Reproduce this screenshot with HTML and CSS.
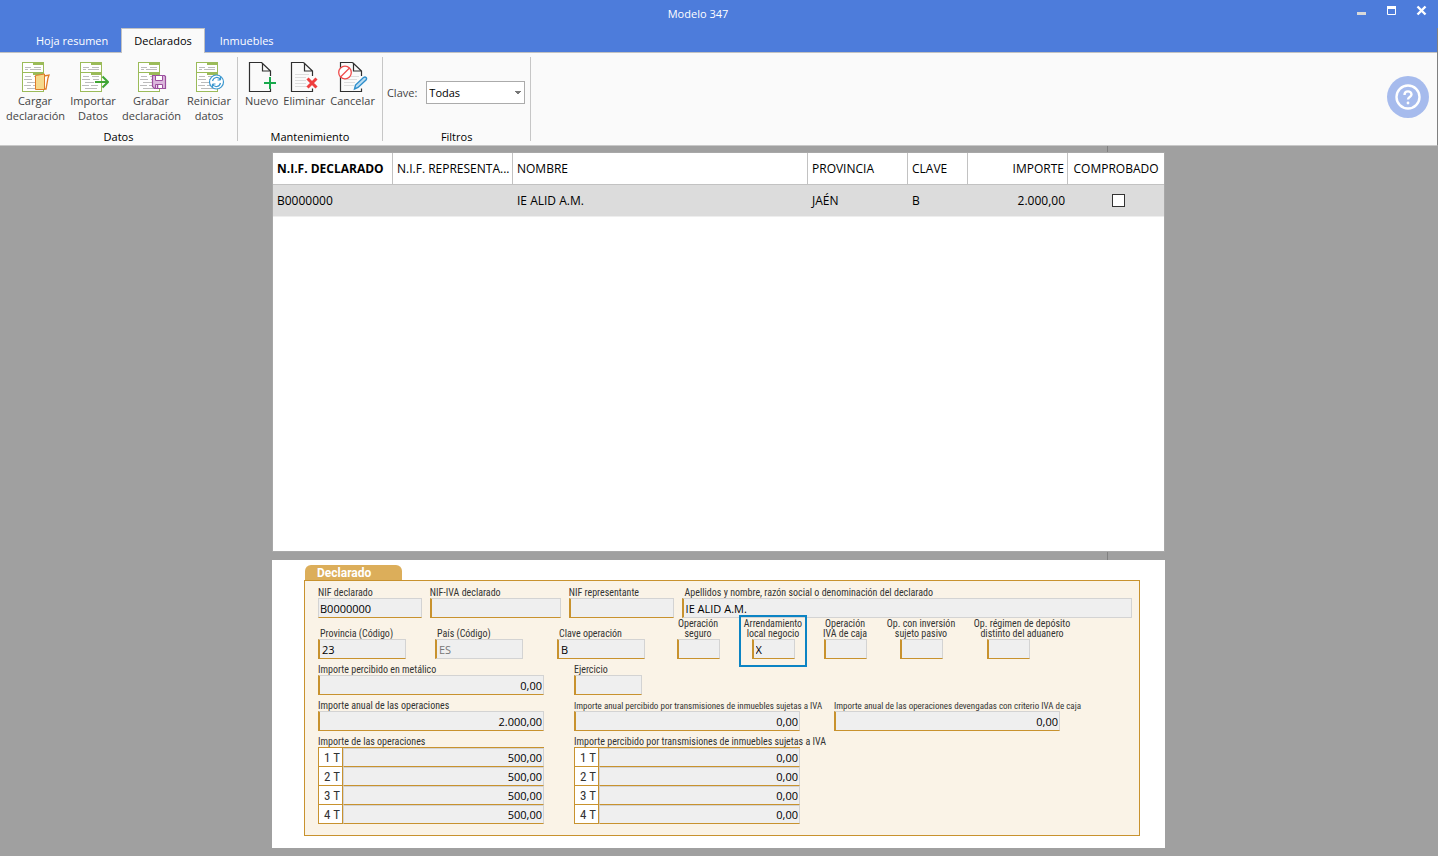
FILE: index.html
```html
<!DOCTYPE html>
<html lang="es">
<head>
<meta charset="utf-8">
<title>Modelo 347</title>
<link rel="stylesheet" href="styles.css">
</head>
<body>
<svg class="defs" aria-hidden="true">
  <symbol id="form-sheet" viewBox="0 0 30 32">
    <rect x="1.500" y="1.500" width="21" height="29" fill="#fff" stroke="#9bbb59"/>
    <path d="M12 1h11v3H12zM12 11h11v3H12z" fill="#9bbb59"/>
    <path d="M1 11.500h21" stroke="#9bbb59"/>
    <path d="M4 6.500h6M13 6.500h7M4 8.500h3M9 8.500h11M4 15.500h6M13 15.500h7M3 18.500h8M14 18.500h6M6 21.500h9M3 24.500h7M12 24.500h7M6 27.500h12" stroke="#bcbcbc"/>
  </symbol>
  <symbol id="page" viewBox="0 0 30 32">
    <path d="M14.500 1.500h-12v29h21v-3M14.500 1.500l9 8.500v5M15.500 2.500v7.500h8" fill="none" stroke="#2f2f2f" stroke-width="1.200"/>
  </symbol>
</svg>

<header>
  <div class="titlebar">
    <h1>Modelo 347</h1>
    <div class="window-buttons">
      <button aria-label="Minimizar"><svg width="11" height="11"><path d="M1 8.500h9" stroke="#d9d9d9" stroke-width="3"/></svg></button>
      <button aria-label="Maximizar"><svg width="11" height="11"><path d="M1.500 2v7.500h8V2" fill="none" stroke="#fff"/><path d="M1 2.500h9" stroke="#fff" stroke-width="3"/></svg></button>
      <button aria-label="Cerrar"><svg width="11" height="11"><path d="M1.500 1.500l8 8M9.500 1.500l-8 8" stroke="#fff" stroke-width="2.400"/></svg></button>
    </div>
  </div>
  <nav class="tabs">
    <button>Hoja resumen</button>
    <button class="active">Declarados</button>
    <button>Inmuebles</button>
  </nav>
  <div class="ribbon">
    <section class="group">
      <div class="tools data-tools">
        <button><svg width="30" height="32"><use href="#form-sheet"/><path d="M23 15l5-1-1 3-2 11h-3" fill="#fff" stroke="#e07b28" stroke-width="1.300"/><path d="M14.500 14.500l9-1.500v15.500h-9z" fill="#f6d98c" stroke="#e07b28"/></svg>Cargar<br>declaración</button>
        <button><svg width="30" height="32"><use href="#form-sheet"/><path d="M16 21h13M23.500 15.500l5.500 5.500-5.500 5.500" fill="none" stroke="#3fa535" stroke-width="2"/></svg>Importar<br>Datos</button>
        <button><svg width="30" height="32"><use href="#form-sheet"/><path d="M15.500 14.500h12l1 1v12h-11l-2-2z" fill="#dcb8dd" stroke="#9b4f9e" stroke-width="1.200"/><path d="M18.500 14.500h7v5h-7zM18.500 23.500h7v4h-7z" fill="#fff" stroke="#9b4f9e"/><path d="M20.500 24v3" stroke="#9b4f9e" stroke-width="1.500"/></svg>Grabar<br>declaración</button>
        <button><svg width="30" height="32"><use href="#form-sheet"/><circle cx="21.500" cy="21" r="7" fill="#fff" stroke="#3b97cf" stroke-width="1.200"/><path d="M17.500 20c1-4 6-5 8-1v-3M25.500 19h-3M25.500 22c-1 4-6 5-8 1v3M17.500 23h3" fill="none" stroke="#3b97cf" stroke-width="1.200"/></svg>Reiniciar<br>datos</button>
      </div>
      <h2>Datos</h2>
    </section>
    <section class="group">
      <div class="tools edit-tools">
        <button><svg width="30" height="32"><use href="#page"/><path d="M23 16v12M17 22h12" stroke="#18a94c" stroke-width="2"/></svg>Nuevo</button>
        <button><svg width="30" height="32"><use href="#page"/><path d="M6 13.500h14M6 16.500h11M6 19.500h11M6 22.500h11M6 25.500h12" stroke="#ddd"/><path d="M18.500 17.500l9 9M27.500 17.500l-9 9" stroke="#ef3e3e" stroke-width="3"/></svg>Eliminar</button>
        <button><svg width="30" height="32"><use href="#page"/><path d="M10 15.500h11M6 18.500h13M6 21.500h11M6 24.500h10" stroke="#ddd"/><circle cx="7" cy="11.500" r="6.300" fill="#fff" stroke="#ef4b4b" stroke-width="1.300"/><path d="M2.500 16l9-9" stroke="#ef4b4b" stroke-width="1.300"/><path d="M16.500 28l1-4 8-7.500c2-1.500 4 .5 2.500 2.500l-8 7.500z" fill="#b9dcf2" stroke="#2f8fcc" stroke-width="1.400"/></svg>Cancelar</button>
      </div>
      <h2>Mantenimiento</h2>
    </section>
    <section class="group">
      <div class="filter">
        <label for="clave">Clave:</label>
        <select id="clave"><option>Todas</option></select>
      </div>
      <h2>Filtros</h2>
    </section>
    <button class="help" aria-label="Ayuda"><svg width="42" height="42"><circle cx="21" cy="21" r="21" fill="#a6bbed"/><circle cx="21" cy="21" r="11.500" fill="none" stroke="#fff" stroke-width="2.400"/><path d="M17.500 19c0-5 7-4.500 7-.5 0 2.500-3.500 2.500-3.500 5" fill="none" stroke="#fff" stroke-width="2.400"/><circle cx="21" cy="27" r="1.400" fill="#fff"/></svg></button>
  </div>
</header>

<div class="workspace">
<main>
  <div class="list">
    <table>
      <colgroup><col class="w120"><col class="w120"><col><col class="w100"><col class="w60"><col class="w100"><col class="w96"></colgroup>
      <thead><tr><th class="sorted">N.I.F. DECLARADO</th><th>N.I.F. REPRESENTA...</th><th>NOMBRE</th><th>PROVINCIA</th><th>CLAVE</th><th class="num">IMPORTE</th><th class="mid">COMPROBADO</th></tr></thead>
      <tbody><tr><td>B0000000</td><td></td><td>IE ALID A.M.</td><td>JAÉN</td><td>B</td><td class="num">2.000,00</td><td class="mid"><input type="checkbox" aria-label="Comprobado"></td></tr></tbody>
    </table>
  </div>

  <form class="detail">
    <h2>Declarado</h2>
    <div class="sheet">
      <div class="row identity">
        <div class="field"><label for="nif">NIF declarado</label><input id="nif" class="plain" value="B0000000"></div>
        <div class="field"><label for="nifiva">NIF-IVA declarado</label><input id="nifiva"></div>
        <div class="field"><label for="nifrep">NIF representante</label><input id="nifrep"></div>
        <div class="field name"><label for="nombre">Apellidos y nombre, razón social o denominación del declarado</label><input id="nombre" value="IE ALID A.M."></div>
      </div>
      <div class="row keys">
        <div class="field"><label for="prov">Provincia (Código)</label><input id="prov" value="23"></div>
        <div class="field country"><label for="pais">País (Código)</label><input id="pais" value="ES" disabled></div>
        <div class="field"><label for="op">Clave operación</label><input id="op" value="B"></div>
        <div class="field flag insurance"><label for="seguro">Operación<br>seguro</label><input id="seguro"></div>
        <div class="field flag highlight"><label for="arr">Arrendamiento<br>local negocio</label><input id="arr" value="X"></div>
        <div class="field flag"><label for="caja">Operación<br>IVA de caja</label><input id="caja"></div>
        <div class="field flag"><label for="inv">Op. con inversión<br>sujeto pasivo</label><input id="inv"></div>
        <div class="field flag deposit"><label for="dep">Op. régimen de depósito<br>distinto del aduanero</label><input id="dep"></div>
      </div>
      <div class="row amounts">
        <div class="field"><label for="metal">Importe percibido en metálico</label><input id="metal" class="num" value="0,00"></div>
        <div class="field year"><label for="ej">Ejercicio</label><input id="ej"></div>
      </div>
      <div class="row amounts">
        <div class="field"><label for="anual">Importe anual de las operaciones</label><input id="anual" class="num" value="2.000,00"></div>
        <div class="field small"><label for="inm">Importe anual percibido por transmisiones de inmuebles sujetas a IVA</label><input id="inm" class="num" value="0,00"></div>
        <div class="field small"><label for="dev">Importe anual de las operaciones devengadas con criterio IVA de caja</label><input id="dev" class="num" value="0,00"></div>
      </div>
      <div class="row amounts">
        <div class="field" role="group" aria-labelledby="q1">
          <span class="caption" id="q1">Importe de las operaciones</span>
          <div class="quarters">
            <label for="a1">1 T</label><input id="a1" value="500,00">
            <label for="a2">2 T</label><input id="a2" value="500,00">
            <label for="a3">3 T</label><input id="a3" value="500,00">
            <label for="a4">4 T</label><input id="a4" value="500,00">
          </div>
        </div>
        <div class="field" role="group" aria-labelledby="q2">
          <span class="caption" id="q2">Importe percibido por transmisiones de inmuebles sujetas a IVA</span>
          <div class="quarters">
            <label for="b1">1 T</label><input id="b1" value="0,00">
            <label for="b2">2 T</label><input id="b2" value="0,00">
            <label for="b3">3 T</label><input id="b3" value="0,00">
            <label for="b4">4 T</label><input id="b4" value="0,00">
          </div>
        </div>
      </div>
    </div>
  </form>
</main>
</div>
</body>
</html>
```
FILE: styles.css
```css
* { box-sizing: border-box; }
body {
  margin: 0;
  min-height: 100vh;
  display: flex;
  flex-direction: column;
  background: #a0a0a0;
  font: 11px/15px "Open Sans", "Noto Sans", sans-serif;
  color: #000;
}
h1, h2 { margin: 0; font: inherit; }
button { font: inherit; color: inherit; background: none; border: 0; padding: 0; }
input, select { font: inherit; color: #000; border-radius: 0; }
.defs { position: absolute; width: 0; height: 0; }

/* Title bar and tabs */
.titlebar {
  display: grid;
  grid-template-columns: 1fr auto 1fr;
  height: 28px;
  background: #4d7cdb;
  color: #fff;
}
.titlebar h1 { grid-column: 2; padding: 6px 42px 0 0; }
.window-buttons { display: flex; justify-content: flex-end; gap: 19px; padding: 5px 11px 0 0; }
.window-buttons button { height: 11px; }
.window-buttons svg, .tools svg, .help svg { display: block; }
.tabs {
  display: flex;
  height: 25px;
  padding-left: 21px;
  background: #4d7cdb;
  border-right: 1px solid #808080;
  box-shadow: inset 0 -1px #c2c2c2;
  color: #fff;
}
.tabs button { padding: 0 13px 1px 15px; }
.tabs .active {
  padding: 0 12px 1px;
  background: #fafafa;
  border: 1px solid #c2c2c2;
  border-bottom: 0;
  color: #000;
}

/* Ribbon */
.ribbon {
  display: flex;
  height: 93px;
  padding: 4px 0;
  background: #fafafa;
  border-right: 1px solid #808080;
  border-bottom: 1px solid #c8c8c8;
}
.group { display: flex; flex-direction: column; justify-content: space-between; border-right: 1px solid #c6c6c6; }
.group h2 { margin-bottom: -4px; text-align: center; line-height: 17px; }
.tools { display: flex; padding-top: 4px; color: #444; }
.tools button { display: flex; flex-direction: column; align-items: center; }
.data-tools { padding-left: 6px; }
.data-tools button { display: block; width: 58px; margin-right: -1px; }
.data-tools button + button { margin-left: 1px; }
.data-tools svg { margin-left: 15px; }
.edit-tools { gap: 5px; padding: 4px 7px 0; }
.filter { display: flex; align-items: center; gap: 9px; padding: 24px 5px 0 4px; color: #444; }
.filter select {
  appearance: none;
  width: 99px;
  height: 23px;
  padding: 0 2px;
  border: 1px solid #ababab;
  background:
    linear-gradient(to top right, transparent 50%, #777 50%) right 6px center / 4px 4px no-repeat,
    linear-gradient(to top left, transparent 50%, #777 50%) right 2px center / 4px 4px no-repeat,
    #fff;
}
.help { margin: 0 8px 4px auto; align-self: center; }

/* Workspace */
.workspace { flex: 1; display: flex; flex-direction: column; padding-right: 1px; }
main {
  position: relative;
  flex: 1;
  display: flex;
  flex-direction: column;
  gap: 8px;
  width: 100%;
  max-width: 893px;
  margin: 0 auto;
  padding: 6px 0 8px;
}
main::before { content: ""; position: absolute; top: 0; bottom: 8px; right: 57px; width: 1px; background: #808080; }
.list { position: relative; flex: 1; background: #fff; border: 1px solid #a8a8a8; }
table { width: 100%; table-layout: fixed; border-collapse: separate; border-spacing: 0; font-size: 12px; }
.w120 { width: 120px; }
.w100 { width: 100px; }
.w60 { width: 60px; }
.w96 { width: 96px; }
th, td { height: 32px; padding: 0 4px; text-align: left; font-weight: 400; white-space: nowrap; }
th { border-right: 1px solid #c2c2c2; border-bottom: 1px solid #c2c2c2; }
th:last-child { border-right: 0; }
td { background: #dcdcdc; border-bottom: 1px solid #eee; }
.sorted { font-weight: 700; }
th.num, td.num { text-align: right; padding-right: 3px; }
th.mid, td.mid { text-align: center; }
td.mid { padding-left: 8px; }
td input { appearance: none; display: block; width: 13px; height: 13px; margin: 0 auto; background: #fff; border: 1px solid #333; }

/* Record detail */
.detail { position: relative; padding: 5px 25px 12px 32px; background: #fff; }
.detail h2 {
  width: 97px;
  height: 15px;
  margin-left: 1px;
  padding-left: 12px;
  border-radius: 6px 6px 0 0;
  background: #dcae5a;
  color: #fff;
  font: 700 12px/17px "Roboto", "Open Sans", sans-serif;
}
.sheet { padding: 5px 7px 11px 13px; border: 1px solid #c8922e; background: #faf3e7; }
.row { display: grid; margin-top: 4px; align-items: end; }
.field { display: flex; flex-direction: column; min-width: 0; }
.field label, .caption {
  height: 12px;
  font: 10px/14px "Roboto Condensed", "Liberation Sans Narrow", sans-serif;
  color: #333;
  white-space: nowrap;
}
.field input {
  width: 100%;
  height: 20px;
  padding: 0 1px 0 2px;
  border: 1px solid #d3d3d3;
  border-left: 2px solid #c8922e;
  border-bottom: 1px solid #c8922e;
  background: #efefef;
}
.field input:disabled { color: #777; border-bottom-color: #d3d3d3; }
.field .plain { border-left: 1px solid #d3d3d3; padding-left: 1px; }
.name label { padding-left: 3px; }
.name input { border-bottom-color: #d3d3d3; }
.field .num, .quarters input { text-align: right; }
.identity { grid-template-columns: 104fr 131fr 105fr 451fr; column-gap: 8px; margin-top: 0; }
.keys { grid-template-columns: 117fr 122fr 105fr 77fr 68fr 76fr 76fr 126fr 47fr; margin-top: 1px; }
.keys .field > input { max-width: 88px; }
.keys .field:not(.flag) label { padding-left: 2px; }
.keys .country label { padding-left: 7px; }
.keys .flag { align-items: center; text-align: center; }
.keys .flag label { height: 20px; line-height: 10px; }
.keys .flag > input { width: 43px; }
.keys .insurance { padding-right: 5px; }
.keys .deposit > input { margin-right: 28px; }
.highlight { position: relative; }
.highlight::before { content: ""; position: absolute; inset: -4px 0 -8px; border: 2px solid #0c84c4; pointer-events: none; }
.amounts { grid-template-columns: 256fr 260fr 298fr; }
.small label { font-size: 9px; }
.amounts .field > input, .quarters { max-width: 226px; }
.amounts .year > input { width: 68px; }
.quarters { display: grid; grid-template-columns: 24px 1fr; grid-auto-rows: 19px; border-top: 1px solid #c8922e; border-left: 1px solid #c8922e; }
.quarters label {
  height: 19px;
  padding-right: 2px;
  border: 1px solid #c8922e;
  border-width: 0 1px 1px 0;
  background: #fff;
  font-size: 13px;
  line-height: 20px;
  text-align: right;
}
.quarters input { height: 19px; border-left: 1px solid #d3d3d3; }
```
